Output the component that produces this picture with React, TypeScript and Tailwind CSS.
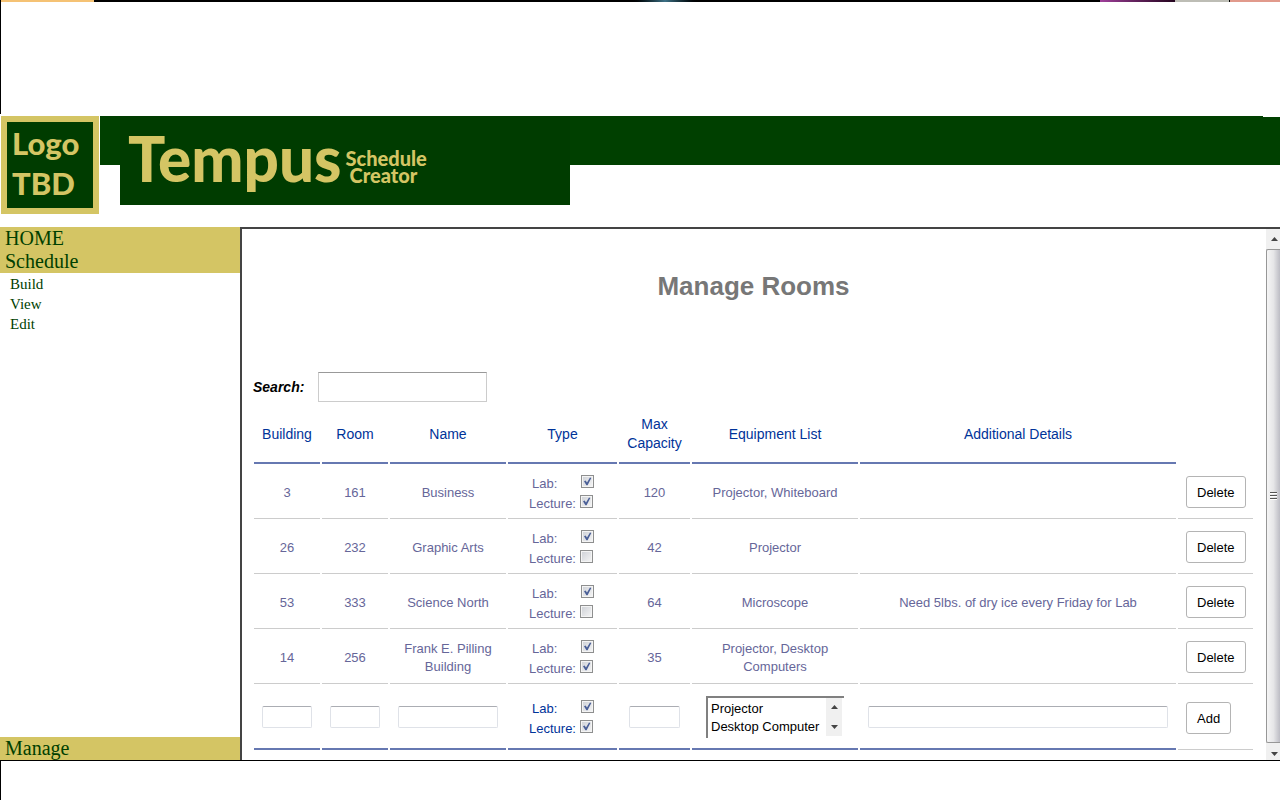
import React from "react";

type Room = {
  building: string;
  room: string;
  name: string;
  lab: boolean;
  lecture: boolean;
  capacity: string;
  equipment: string;
  details: string;
};

const rooms: Room[] = [
  { building: "3", room: "161", name: "Business", lab: true, lecture: true, capacity: "120", equipment: "Projector, Whiteboard", details: "" },
  { building: "26", room: "232", name: "Graphic Arts", lab: true, lecture: false, capacity: "42", equipment: "Projector", details: "" },
  { building: "53", room: "333", name: "Science North", lab: true, lecture: false, capacity: "64", equipment: "Microscope", details: "Need 5lbs. of dry ice every Friday for Lab" },
  { building: "14", room: "256", name: "Frank E. Pilling Building", lab: true, lecture: true, capacity: "35", equipment: "Projector, Desktop Computers", details: "" },
];

const headings = ["Building", "Room", "Name", "Type", "Max Capacity", "Equipment List", "Additional Details"];

function Check({ id, label, checked, indent }: { id: string; label: string; checked: boolean; indent?: boolean }) {
  return (
    <div className={indent ? "flex h-5 items-start justify-between pl-[3px]" : "flex h-5 items-start justify-between pr-px"}>
      <label htmlFor={id} className="leading-[26px]">{label}</label>
      <span className="mt-1 grid">
        <input
          id={id}
          type="checkbox"
          defaultChecked={checked}
          className="peer col-start-1 row-start-1 size-[13px] appearance-none border border-[#8e8f8f] bg-gradient-to-br from-[#cdd0d6] to-[#f6f6f6] shadow-[inset_0_0_0_1px_#f4f4f4]"
        />
        <svg viewBox="0 0 13 13" className="pointer-events-none invisible col-start-1 row-start-1 size-[13px] peer-checked:visible" aria-hidden="true">
          <path d="M3 6.2 L4.6 5.4 L6 7.6 L9 2.4 L10.3 3 L6.6 10.2 L5.4 10.2 Z" fill="#4a5f97" />
        </svg>
      </span>
    </div>
  );
}

function TypeChecks({ id, lab, lecture }: { id: string; lab: boolean; lecture: boolean }) {
  return (
    <div className="mx-auto w-[67px] pr-0.5">
      <Check id={id + "-lab"} label="Lab:" checked={lab} indent />
      <Check id={id + "-lecture"} label="Lecture:" checked={lecture} />
    </div>
  );
}

function Arrow({ down }: { down?: boolean }) {
  return (
    <svg viewBox="0 0 7 4" className="h-1 w-[7px]" aria-hidden="true">
      <path d={down ? "M0 0h7L3.5 4z" : "M0 4h7L3.5 0z"} fill="#444" />
    </svg>
  );
}

const field = "h-[22px] rounded-xs border border-[#dfe2e8] border-t-[#abadb3] bg-white px-1 align-middle text-black";
const button = "h-8 rounded-[3px] border border-[#b4b4b4] bg-white px-[10px] pt-0.5 text-[13px] text-black";
const cell = "border-b border-[#ccc] px-2 pt-[3px] pb-0 text-center";
const typeCell = "border-b border-[#ccc] px-2 py-0 text-center";
const actionCell = "border-b border-[#ccc] px-2 pt-0.5 pb-0";
const footCell = "border-b-2 border-[#6678b1] px-2 pt-0.5 pb-0 text-center";
const footTypeCell = "border-b-2 border-[#6678b1] px-2 py-0 text-center";

export default function App() {
  return (
    <div className="flex min-h-screen flex-col bg-white font-['Liberation_Sans',sans-serif]">
      <div className="flex h-0.5 bg-black">
        <div className="ml-px w-[93px] bg-[#f5c274]" />
        <div className="ml-[536px] w-[70px] bg-gradient-to-r from-black via-[#3d7186] to-black" />
        <div className="ml-auto w-[75px] bg-gradient-to-r from-[#a0409b] to-[#25051f]" />
        <div className="w-[55px] border-r border-black bg-[#bdbdb5]" />
        <div className="w-[50px] bg-[#e19a8c]" />
      </div>
      <div className="h-28 border-l border-black" />

      <header className="mt-0.5 flex h-[111px] shrink-0 items-start">
        <div className="ml-px flex h-[98px] w-[98px] shrink-0 flex-col justify-center border-[6px] border-[#d4c564] bg-[#003c00] pb-1 pl-[5px] font-['Lato',sans-serif] text-[31px] leading-10 font-black text-[#d4c564]">
          <span>Logo</span>
          <span>TBD</span>
        </div>
        <div className="ml-px flex h-[49px] flex-1 items-start bg-[#004000]">
          <div className="ml-5 flex h-[89px] w-[450px] shrink-0 items-center bg-[#003c00] pl-2 font-['Lato',sans-serif] font-black text-[#d4c564]">
            <h1 className="pb-1 text-[62px] leading-[85px]">Tempus</h1>
            <div className="ml-1 pt-3 text-[20px] leading-[17px]">
              <div>Schedule</div>
              <div className="pl-1">Creator</div>
            </div>
          </div>
          <div className="ml-auto h-px w-[17px] bg-white" />
        </div>
      </header>

      <div className="flex grow">
        <nav className="flex w-60 shrink-0 flex-col font-['Liberation_Serif',serif] text-[#004000]">
          <a href="#home" className="bg-[#d4c564] pl-[5px] text-xl leading-[23px]">HOME</a>
          <a href="#schedule" className="bg-[#d4c564] pl-[5px] text-xl leading-[23px]">Schedule</a>
          <ul className="pt-px pl-[10px] text-[15px] leading-5">
            <li><a href="#build">Build</a></li>
            <li><a href="#view">View</a></li>
            <li><a href="#edit">Edit</a></li>
          </ul>
          <a href="#manage" className="mt-auto bg-[#d4c564] pl-[5px] text-xl leading-[23px]">Manage</a>
        </nav>

        <main className="flex min-w-0 flex-1 border-t-2 border-l-2 border-[#444]">
          <div className="min-w-0 flex-1 pr-[11px] pb-[9px] pl-[10px]">
            <h2 className="pt-[42px] text-center text-[26px] leading-[30px] font-bold text-[#777]">Manage Rooms</h2>
            <div className="mt-[71px] flex items-center">
              <label htmlFor="search" className="w-[66px] pl-px text-[14px] font-bold text-black italic">Search:</label>
              <input id="search" type="text" className="h-[30px] w-[169px] border border-[#ccc] border-t-[#999] px-1 text-[13px]" />
            </div>

            <table className="mt-[3px] w-full table-fixed border-separate border-spacing-x-0.5 border-spacing-y-0 text-[13px] leading-[18px]">
              <colgroup>
                <col className="w-[66px]" />
                <col className="w-[66px]" />
                <col className="w-[116px]" />
                <col className="w-[109px]" />
                <col className="w-[71px]" />
                <col className="w-[166px]" />
                <col />
                <col className="w-[75px]" />
              </colgroup>
              <thead>
                <tr className="h-[59px] text-[14px] leading-[19px] text-[#003399]">
                  {headings.map((h) => (
                    <th key={h} scope="col" className="border-b-2 border-[#6678b1] px-0 pt-px pb-0 font-normal">{h}</th>
                  ))}
                  <td />
                </tr>
              </thead>
              <tbody className="text-[#666699]">
                {rooms.map((r) => (
                  <tr key={r.room} className="h-[55px]">
                    <td className={cell}>{r.building}</td>
                    <td className={cell}>{r.room}</td>
                    <td className={cell}>{r.name}</td>
                    <td className={typeCell}><TypeChecks id={"room-" + r.room} lab={r.lab} lecture={r.lecture} /></td>
                    <td className={cell}>{r.capacity}</td>
                    <td className={cell}>{r.equipment}</td>
                    <td className={cell}>{r.details}</td>
                    <td className={actionCell}>
                      <button type="button" className={button}>Delete</button>
                    </td>
                  </tr>
                ))}
              </tbody>
              <tfoot className="text-[#003399]">
                <tr className="h-[66px]">
                  <td className={footCell}><input aria-label="Building" className={field + " w-full"} /></td>
                  <td className={footCell}><input aria-label="Room" className={field + " w-full"} /></td>
                  <td className={footCell}><input aria-label="Name" className={field + " w-full"} /></td>
                  <td className={footTypeCell}><TypeChecks id="new-room" lab lecture /></td>
                  <td className={footCell}><input aria-label="Max Capacity" className={field + " w-[51px]"} /></td>
                  <td className={footCell}>
                    <div className="mx-auto flex h-[42px] w-[138px] border-t-2 border-l-2 border-[#808080] text-left">
                      <select multiple size={2} aria-label="Equipment List" className="min-w-0 flex-1 appearance-none overflow-hidden bg-white p-0 pt-[3px] text-[13px] text-black">
                        <option className="h-[18px] min-h-0 px-[3px] py-0 leading-[18px]">Projector</option>
                        <option className="h-[18px] min-h-0 px-[3px] py-0 leading-[18px]">Desktop Computer</option>
                      </select>
                      <div className="mr-0.5 mb-0.5 flex w-4 shrink-0 flex-col items-center justify-between bg-[#f0f0f0] py-[7px]">
                        <Arrow />
                        <Arrow down />
                      </div>
                    </div>
                  </td>
                  <td className={footCell}><input aria-label="Additional Details" className={field + " w-full"} /></td>
                  <td className={actionCell}>
                    <button type="button" className={button}>Add</button>
                  </td>
                </tr>
              </tfoot>
            </table>
          </div>

          <div className="flex w-[14px] shrink-0 flex-col bg-[#f0f0f0]" aria-hidden="true">
            <div className="flex h-5 items-center justify-center pl-0.5"><Arrow /></div>
            <div className="flex flex-1 flex-col items-center justify-center gap-px rounded-l-xs border-y border-l border-[#979797] bg-gradient-to-r from-[#f5f5f5] via-[#e6e6e8] to-[#bcbcc4]">
              <div className="h-0.5 w-[7px] border-b border-white bg-[#555]" />
              <div className="h-0.5 w-[7px] border-b border-white bg-[#555]" />
              <div className="h-0.5 w-[7px] border-b border-white bg-[#555]" />
            </div>
            <div className="flex h-[17px] items-center justify-center pt-1 pl-0.5"><Arrow down /></div>
          </div>
        </main>
      </div>

      <footer className="h-10 border-t border-l border-black" />
    </div>
  );
}
